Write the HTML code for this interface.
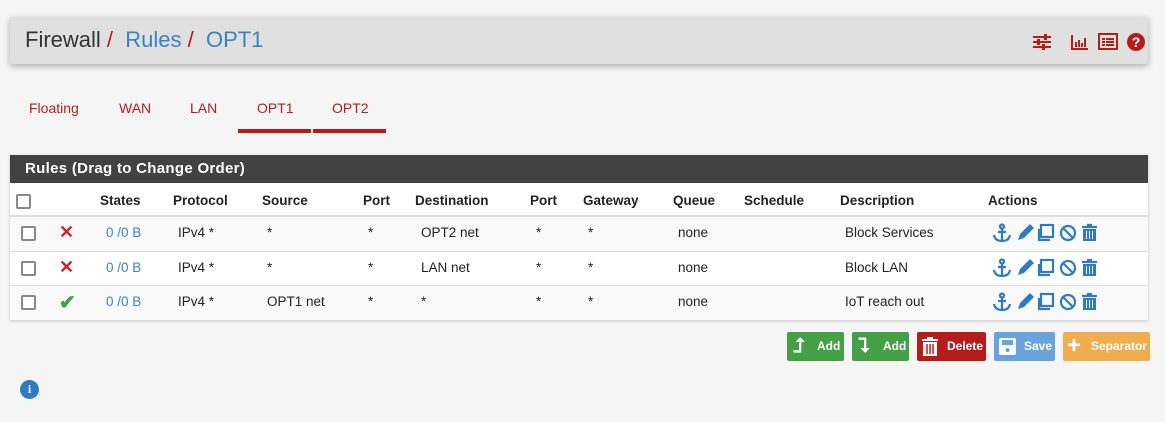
<!DOCTYPE html><html><head><style>
body{margin:0;width:1165px;height:422px;background:#f5f5f5;font-family:"Liberation Sans",sans-serif;position:relative;overflow:hidden;font-size:13.5px;color:#222}
.a{position:absolute}
.hdr{left:10px;top:17px;width:1138px;height:47px;background:#e0e0e0;box-shadow:0 2px 6px rgba(0,0,0,.3)}
.tab{color:#b71c1c;font-size:14px;top:100px}
.ul{top:129px;height:4px;background:#b71c1c}
.panel{left:10px;top:155px;width:1138px;height:165px;background:#fff;box-shadow:0 1px 3px rgba(0,0,0,.2)}
.ph{left:0;top:0;width:1138px;height:28px;background:#424242;color:#fff;font-weight:bold;font-size:15px;line-height:28px;text-indent:15px;letter-spacing:.3px}
.th{top:38px;font-weight:bold;font-size:13.5px}
.row{left:0;width:1138px;height:34px;border-top:1px solid #ddd;background:#f9f9f9}
.cb{width:11px;height:11px;border:2px solid #888;border-radius:2px;background:#fff}
.btn{top:332px;height:29px;color:#fff;font-size:12px;font-weight:bold;border-radius:2px;line-height:29px}
</style></head><body>
<div class="a hdr"><div class="a" style="left:15px;top:10px;font-size:22px;color:#333">Firewall<span style="color:#b71c1c"> / </span><span style="color:#3b82c4">&nbsp;Rules</span><span style="color:#b71c1c"> / </span><span style="color:#3b82c4">&nbsp;OPT1</span></div>
<svg class="a" style="left:1022px;top:15px" width="120" height="20" viewBox="0 0 120 20" fill="#b71c1c">
<rect x="1" y="4" width="18" height="2"/><rect x="1" y="9" width="18" height="2"/><rect x="1" y="14" width="18" height="2"/><rect x="12" y="2" width="3" height="6"/><rect x="5" y="7" width="3" height="6"/><rect x="10" y="12" width="3" height="6"/>
<rect x="39" y="3" width="2" height="15"/><rect x="39" y="16" width="17" height="2"/><rect x="43" y="10" width="2" height="5"/><rect x="46" y="8" width="2" height="7"/><rect x="49" y="11" width="2" height="4"/><rect x="52" y="6" width="2" height="9"/>
<rect x="67" y="2" width="18" height="15" fill="none" stroke="#b71c1c" stroke-width="2"/><rect x="70" y="6" width="3" height="2"/><rect x="74" y="6" width="8" height="2"/><rect x="70" y="9" width="3" height="2"/><rect x="74" y="9" width="8" height="2"/><rect x="70" y="12" width="3" height="2"/><rect x="74" y="12" width="8" height="2"/>
<circle cx="104" cy="10" r="9"/><text x="104" y="15" font-size="14" font-weight="bold" fill="#fff" text-anchor="middle" font-family="Liberation Sans">?</text></svg></div>
<div class="a tab" style="left:29px">Floating</div><div class="a tab" style="left:119px">WAN</div><div class="a tab" style="left:190px">LAN</div><div class="a tab" style="left:257px">OPT1</div><div class="a tab" style="left:332px">OPT2</div>
<div class="a ul" style="left:238px;width:73px"></div><div class="a ul" style="left:313px;width:73px"></div>
<div class="a panel"><div class="a ph">Rules (Drag to Change Order)</div>
<div class="a" style="left:0;top:28px;width:1138px;height:32px;border-bottom:2px solid #ddd"></div>
<div class="a cb" style="left:6px;top:39px"></div>
<div class="a th" style="left:90px">States</div><div class="a th" style="left:163px">Protocol</div><div class="a th" style="left:252px">Source</div><div class="a th" style="left:353px">Port</div><div class="a th" style="left:405px">Destination</div><div class="a th" style="left:520px">Port</div><div class="a th" style="left:573px">Gateway</div><div class="a th" style="left:663px">Queue</div><div class="a th" style="left:734px">Schedule</div><div class="a th" style="left:830px">Description</div><div class="a th" style="left:978px">Actions</div>
<div class="a row" style="top:61px"></div><div class="a row" style="top:96px;background:#fff"></div><div class="a row" style="top:130px"></div>
</div>
<div id="rows"></div>
<script>
var R=[["x","*","OPT2 net","Block Services"],["x","*","LAN net","Block LAN"],["v","OPT1 net","*","IoT reach out"]];
var h="";R.forEach(function(r,i){var y=233+i*34.5-8;
h+='<div class="a cb" style="left:21px;top:'+(y+1)+'px"></div>';
h+=r[0]=="x"?'<div class="a" style="left:59px;top:'+(y-3)+'px;color:#c62828;font-size:18px;font-weight:bold">✕</div>':'<div class="a" style="left:59px;top:'+(y-4)+'px;color:#43a047;font-size:20px;font-weight:bold">✔</div>';
var c=[[106,"0 /0 B","#3b82c4"],[178,"IPv4 *"],[267,r[1]],[368,"*"],[421,r[2]],[536,"*"],[588,"*"],[678,"none"],[845,r[3]]];
c.forEach(function(t){h+='<div class="a" style="left:'+t[0]+'px;top:'+y+'px;color:'+(t[2]||"#222")+'">'+t[1]+'</div>'});
h+='<svg class="a" style="left:992px;top:'+(y-2)+'px" width="108" height="20" viewBox="0 0 108 20" fill="none" stroke="#2f7bbf" stroke-width="2.2"><circle cx="10" cy="3.5" r="2"/><path d="M10 6v12M6 9h8M2 12q1 6 8 6q7 0 8-6"/><path d="M26 17l2-6 10-10 4 4-10 10z" fill="#2f7bbf" stroke="none"/><rect x="49" y="2" width="12" height="12"/><path d="M47 6v11h11"/><circle cx="76" cy="10" r="7"/><path d="M71 5l10 10"/><path d="M90 4h15M95 2h5" /><rect x="91" y="6" width="13" height="12" fill="#2f7bbf" stroke="none"/><path d="M94.5 8v8M97.5 8v8M100.5 8v8" stroke="#fff" stroke-width="1"/></svg>';
});document.getElementById("rows").innerHTML=h;
</script>
<div class="a btn" style="left:787px;width:57px;background:#43a047"><span style="position:absolute;left:6px;top:0;font-size:20px">⮥</span><span style="position:absolute;left:30px">Add</span></div>
<div class="a btn" style="left:852px;width:57px;background:#43a047"><span style="position:absolute;left:6px;top:0;font-size:20px">⮧</span><span style="position:absolute;left:31px">Add</span></div>
<div class="a btn" style="left:917px;width:69px;background:#b71c1c"><svg style="position:absolute;left:5px;top:5px" width="16" height="19" viewBox="0 0 16 19" fill="#fff"><rect x="0" y="2" width="16" height="2"/><rect x="5" y="0" width="6" height="2"/><path d="M1 5h14v14H1z"/><path d="M5 7v10M8 7v10M11 7v10" stroke="#b71c1c" stroke-width="1.5"/></svg><span style="position:absolute;left:30px">Delete</span></div>
<div class="a btn" style="left:994px;width:61px;background:#6aa3dc"><svg style="position:absolute;left:5px;top:6px" width="17" height="17" viewBox="0 0 17 17"><rect width="17" height="17" rx="2" fill="#fff"/><rect x="3" y="2" width="11" height="5" fill="#6aa3dc"/><circle cx="8.5" cy="12" r="2" fill="#6aa3dc"/></svg><span style="position:absolute;left:30px">Save</span></div>
<div class="a btn" style="left:1063px;width:87px;background:#f0ad4e"><span style="position:absolute;left:4px;top:-1px;font-size:24px;font-weight:bold">+</span><span style="position:absolute;left:28px">Separator</span></div>
<div class="a" style="left:20px;top:380px;width:19px;height:19px;border-radius:50%;background:#2f7bbf;color:#fff;font-weight:bold;font-size:12px;text-align:center;line-height:19px;font-family:'Liberation Serif',serif">i</div>
</body></html>
